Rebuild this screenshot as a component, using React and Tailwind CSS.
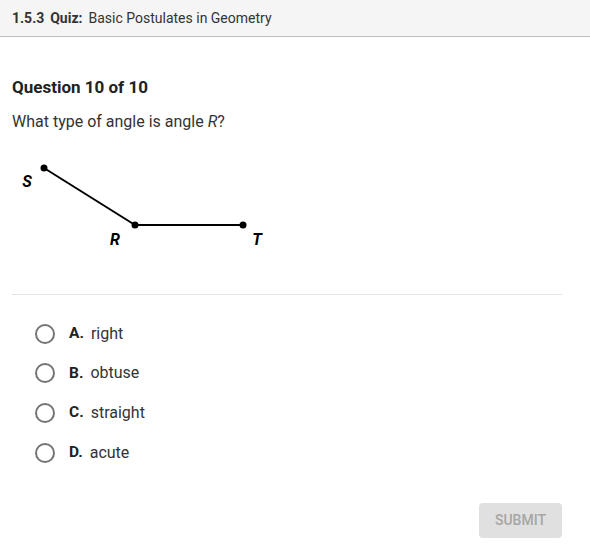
import React, { useState } from "react";

const options = [
  { letter: "A.", text: "right" },
  { letter: "B.", text: "obtuse" },
  { letter: "C.", text: "straight" },
  { letter: "D.", text: "acute" },
];

const AngleDiagram = () => (
  <svg width="280" height="110" viewBox="0 150 280 110" className="block">
    <line x1="44" y1="168" x2="135" y2="225" stroke="#000" strokeWidth="2" />
    <line x1="135" y1="225" x2="243" y2="225" stroke="#000" strokeWidth="2" />
    <circle cx="44" cy="168" r="3.5" fill="#000" />
    <circle cx="135" cy="225" r="3.5" fill="#000" />
    <circle cx="243" cy="225" r="3.5" fill="#000" />
    <text x="27" y="187" fontSize="16" fontWeight="700" fontStyle="italic" fontFamily="Roboto, sans-serif" textAnchor="middle">S</text>
    <text x="115" y="245" fontSize="16" fontWeight="700" fontStyle="italic" fontFamily="Roboto, sans-serif" textAnchor="middle">R</text>
    <text x="257" y="245" fontSize="16" fontWeight="700" fontStyle="italic" fontFamily="Roboto, sans-serif" textAnchor="middle">T</text>
  </svg>
);

const App = () => {
  const [selected, setSelected] = useState(null);

  return (
    <div className="w-[590px] h-[558px] bg-white font-['Roboto',sans-serif] text-[#222]">
      {/* Header */}
      <div className="h-[37px] bg-[#f5f5f5] border-b border-[#bdbdbd] flex items-center px-3 text-[14px]">
        <span className="font-bold text-[#333]">1.5.3</span>
        <span className="font-bold text-[#333] ml-[6px]">Quiz:</span>
        <span className="ml-[6px] text-[#333]">Basic Postulates in Geometry</span>
      </div>

      <div className="px-3">
        <h2 className="mt-[40px] text-[17px] font-bold leading-[20px] text-[#222]">Question 10 of 10</h2>
        <p className="mt-[15px] text-[16px] leading-[20px] text-[#333]">
          What type of angle is angle <i>R</i>?
        </p>

        <div className="mt-[18px] -ml-3">
          <AngleDiagram />
        </div>

        <div className="mt-[34px] w-[550px] border-t border-[#e4e4e4]" />

        {/* Options */}
        <div className="mt-[28px] flex flex-col gap-[18.7px] pl-[23px]">
          {options.map((o, i) => (
            <label key={i} className="flex items-center h-[21px] cursor-pointer" onClick={() => setSelected(i)}>
              <span className="w-[20px] h-[20px] rounded-full border-2 border-[#757575] flex items-center justify-center">
                {selected === i && <span className="w-[10px] h-[10px] rounded-full bg-[#757575]" />}
              </span>
              <span className="ml-[14px] font-bold text-[15.5px] text-[#222]">{o.letter}</span>
              <span className="ml-[7px] text-[16px] text-[#333]">{o.text}</span>
            </label>
          ))}
        </div>

        {/* Submit */}
        <div className="w-[550px] flex justify-end mt-[40px]">
          <button className="w-[83px] h-[35px] rounded-[4px] bg-[#e0e0e0] text-[#a6a6a6] text-[14px] font-medium">
            SUBMIT
          </button>
        </div>
      </div>
    </div>
  );
};

export default App;
